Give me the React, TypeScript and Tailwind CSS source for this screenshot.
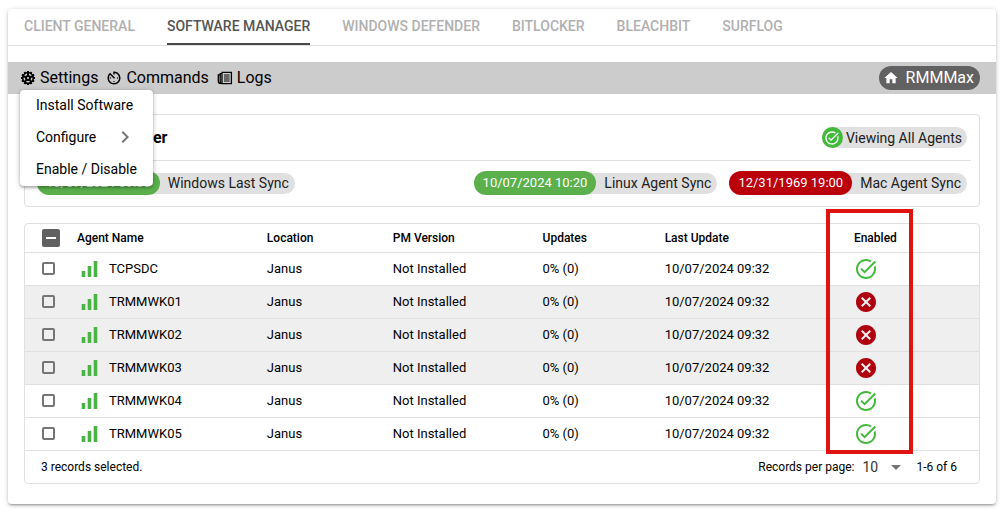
import { useState } from 'react';
import type { ReactNode } from 'react';
import clsx from 'clsx';
import { IoMdCog, IoMdTimer } from 'react-icons/io';
import { MdArrowDropDown, MdChevronRight, MdHome, MdTaskAlt, MdCancel } from 'react-icons/md';

const tabs = ['CLIENT GENERAL', 'SOFTWARE MANAGER', 'WINDOWS DEFENDER', 'BITLOCKER', 'BLEACHBIT', 'SURFLOG'];

const agents = [
  { name: 'TCPSDC', enabled: true },
  { name: 'TRMMWK01', enabled: false },
  { name: 'TRMMWK02', enabled: false },
  { name: 'TRMMWK03', enabled: false },
  { name: 'TRMMWK04', enabled: true },
  { name: 'TRMMWK05', enabled: true },
];

function SignalIcon() {
  return (
    <svg viewBox="0 0 24 24" className="size-6 fill-[#4ab346]" aria-hidden="true">
      <path d="M4.7 14h3.6v6H4.7zM10.7 9h3.6v11h-3.6zM16.7 4h3.6v16h-3.6z" />
    </svg>
  );
}

function LogsIcon() {
  return (
    <svg viewBox="0 0 16 16" className="size-4 fill-none stroke-black" strokeWidth="1.3" aria-hidden="true">
      <path d="M5 2.4h9.4v11.2H5zM5 3.6H3.2v8.6q0 1.4 1.8 1.4M3 4.8H1.3v6.8q0 1.8 2.2 2" />
      <path d="M7 5h5.6M7 7h5.6M7 9h5.6M7 11h5.6" strokeWidth="1.1" />
    </svg>
  );
}

function SyncChip({ date, label, ok = true }: { date: string; label: string; ok?: boolean }) {
  return (
    <div className="flex items-center rounded-full text-sm">
      <span
        className={clsx(
          'z-10 flex h-6 items-center rounded-full px-[9px] text-[13px] text-white',
          ok ? 'bg-[#5bb04c]' : 'bg-[#b9000b]',
        )}
      >
        {date}
      </span>
      <span className="-ml-3 flex h-[21px] items-center rounded-r-full bg-[#e0e0e0] pr-1.5 pl-5 text-[#212121]">
        {label}
      </span>
    </div>
  );
}

function ToolbarButton({ icon, children }: { icon: ReactNode; children: ReactNode }) {
  return (
    <button className="flex items-center gap-1">
      {icon}
      {children}
    </button>
  );
}

function SettingsMenu() {
  return (
    <div
      role="menu"
      className="absolute top-7 left-3 z-20 flex w-[133px] flex-col rounded bg-white text-sm shadow-[0_1px_5px_rgba(0,0,0,0.3),0_2px_2px_rgba(0,0,0,0.14)]"
    >
      <button role="menuitem" className="flex h-8 items-center px-4 pb-0.5 whitespace-nowrap">Install Software</button>
      <button role="menuitem" className="flex h-8 items-center justify-between px-4 pb-0.5">
        Configure
        <MdChevronRight size={24} className="text-[#757575]" />
      </button>
      <button role="menuitem" className="flex h-8 items-center px-4 pb-0.5 whitespace-nowrap">Enable / Disable</button>
    </div>
  );
}

export default function App() {
  const [tab, setTab] = useState('SOFTWARE MANAGER');

  return (
    <div className="px-2 pt-[9px] pr-[9px] pb-2.5 font-[Roboto,sans-serif] text-black">
      <main className="rounded bg-white pb-5 shadow-[0_1px_5px_rgba(0,0,0,0.2),0_2px_2px_rgba(0,0,0,0.14),0_3px_1px_-2px_rgba(0,0,0,0.12)]">
        <nav className="flex h-[37px] border-b border-[#e0e0e0] text-sm font-medium">
          {tabs.map((t) => (
            <button
              key={t}
              onClick={() => setTab(t)}
              className={clsx('flex px-4', t === tab ? 'text-[#555555]' : 'text-[#b0b0b0]')}
            >
              <span className={clsx('flex h-9 items-center border-b-2', t === tab ? 'border-[#4a4a4a]' : 'border-transparent')}>
                {t}
              </span>
            </button>
          ))}
        </nav>

        <div className="relative mt-4 flex h-8 items-center justify-between bg-[#cccccc] pr-4 pl-3 text-base">
          <div className="flex gap-2">
            <ToolbarButton icon={<IoMdCog size={16} />}>Settings</ToolbarButton>
            <ToolbarButton icon={<IoMdTimer size={16} />}>Commands</ToolbarButton>
            <ToolbarButton icon={<LogsIcon />}>Logs</ToolbarButton>
          </div>
          <button className="flex h-6 items-center gap-[7px] rounded-full bg-[#616161] pr-1.5 pl-1 text-white">
            <MdHome size={16} />
            RMMMax
          </button>
          <SettingsMenu />
        </div>

        <section className="mx-4 mt-5 rounded border border-[#e0e0e0] px-2 pb-[11px]">
          <header className="flex h-[46px] items-center justify-between border-b border-[#e0e0e0] pr-1 pl-0.5">
            <h1 className="text-base font-bold">Software Manager</h1>
            <div className="flex h-[21px] items-center gap-[3px] rounded-full bg-[#e0e0e0] pr-[5px] text-sm text-[#212121]">
              <span className="flex size-[21px] items-center justify-center rounded-full bg-[#43b93c] text-white">
                <MdTaskAlt size={16} />
              </span>
              Viewing All Agents
            </div>
          </header>
          <div className="mt-2.5 flex justify-between px-1">
            <SyncChip date="10/07/2024 09:30" label="Windows Last Sync" />
            <div className="flex gap-3">
              <SyncChip date="10/07/2024 10:20" label="Linux Agent Sync" />
              <SyncChip date="12/31/1969 19:00" label="Mac Agent Sync" ok={false} />
            </div>
          </div>
        </section>

        <section className="relative mx-4 mt-4 rounded border border-[#e0e0e0]">
          <table className="w-full table-fixed text-left text-[13px]">
            <colgroup>
              <col className="w-[52px]" />
              <col className="w-[19.9%]" />
              <col className="w-[13.2%]" />
              <col className="w-[15.7%]" />
              <col className="w-[12.8%]" />
              <col className="w-[16.8%]" />
              <col />
            </colgroup>
            <thead className="text-xs">
              <tr className="h-7 border-b border-[#e0e0e0] [&>th]:font-medium">
                <th className="pl-[17px]">
                  <label className="relative flex size-[18px] items-center justify-center rounded-[2px] bg-[#616161]">
                    <input type="checkbox" aria-label="Select all agents" className="absolute inset-0 appearance-none" />
                    <span className="h-0.5 w-2.5 bg-white" />
                  </label>
                </th>
                <th>Agent Name</th>
                <th>Location</th>
                <th>PM Version</th>
                <th>Updates</th>
                <th>Last Update</th>
                <th className="pl-[29px]">Enabled</th>
              </tr>
            </thead>
            <tbody>
              {agents.map(({ name, enabled }) => (
                <tr key={name} className={clsx('h-[33px] border-b border-[#e0e0e0]', !enabled && 'bg-[#efefef]')}>
                  <td className="pl-[17px]">
                    <input
                      type="checkbox"
                      aria-label={`Select ${name}`}
                      className="block size-[13px] appearance-none rounded-[2px] border-2 border-[#757575]"
                    />
                  </td>
                  <td>
                    <span className="flex items-center gap-2">
                      <SignalIcon />
                      {name}
                    </span>
                  </td>
                  <td>Janus</td>
                  <td>Not Installed</td>
                  <td>0% (0)</td>
                  <td>10/07/2024 09:32</td>
                  <td className="pl-[29px]">
                    {enabled ? (
                      <MdTaskAlt size={24} className="text-[#43b93c]" />
                    ) : (
                      <MdCancel size={24} className="text-[#b0000f]" />
                    )}
                  </td>
                </tr>
              ))}
            </tbody>
          </table>

          <footer className="flex h-8 items-center justify-between pr-[22px] pl-4 text-xs">
            <span>3 records selected.</span>
            <div className="flex items-center">
              <label htmlFor="page-size">Records per page:</label>
              <span className="relative ml-2 flex items-center">
                <select id="page-size" className="w-11 appearance-none text-sm text-[#333333]" defaultValue="10">
                  <option>10</option>
                  <option>25</option>
                  <option>50</option>
                </select>
                <MdArrowDropDown size={24} className="pointer-events-none absolute -right-0.5 text-[#757575]" />
              </span>
              <span className="ml-2.5">1-6 of 6</span>
            </div>
          </footer>

          {/* highlight around the Enabled column */}
          <div className="pointer-events-none absolute -top-[15px] right-[66px] bottom-[29px] w-[87px] border-4 border-[#df1411]" />
        </section>
      </main>
    </div>
  );
}
